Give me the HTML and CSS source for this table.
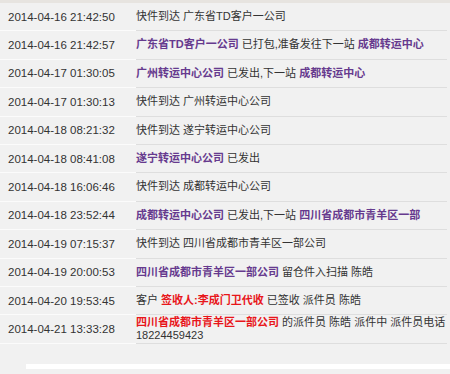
FILE: index.html
```html
<!DOCTYPE html>
<html lang="zh-CN">
<head>
<meta charset="utf-8">
<title>快递跟踪</title>
<link rel="stylesheet" href="styles.css">
</head>
<body>
<div class="topbar"></div>
<div class="track">
  <div class="row"><div class="time">2014-04-16 21:42:50</div><div class="ctx">快件到达 广东省TD客户一公司</div></div>
  <div class="row"><div class="time">2014-04-16 21:42:57</div><div class="ctx"><b class="p">广东省TD客户一公司</b> 已打包,准备发往下一站 <b class="p">成都转运中心</b></div></div>
  <div class="row"><div class="time">2014-04-17 01:30:05</div><div class="ctx"><b class="p">广州转运中心公司</b> 已发出,下一站 <b class="p">成都转运中心</b></div></div>
  <div class="row"><div class="time">2014-04-17 01:30:13</div><div class="ctx">快件到达 广州转运中心公司</div></div>
  <div class="row"><div class="time">2014-04-18 08:21:32</div><div class="ctx">快件到达 遂宁转运中心公司</div></div>
  <div class="row"><div class="time">2014-04-18 08:41:08</div><div class="ctx"><b class="p">遂宁转运中心公司</b> 已发出</div></div>
  <div class="row"><div class="time">2014-04-18 16:06:46</div><div class="ctx">快件到达 成都转运中心公司</div></div>
  <div class="row"><div class="time">2014-04-18 23:52:44</div><div class="ctx"><b class="p">成都转运中心公司</b> 已发出,下一站 <b class="p">四川省成都市青羊区一部</b></div></div>
  <div class="row"><div class="time">2014-04-19 07:15:37</div><div class="ctx">快件到达 四川省成都市青羊区一部公司</div></div>
  <div class="row"><div class="time">2014-04-19 20:00:53</div><div class="ctx"><b class="p">四川省成都市青羊区一部公司</b> 留仓件入扫描 陈皓</div></div>
  <div class="row"><div class="time">2014-04-20 19:53:45</div><div class="ctx">客户 <b class="r">签收人:李成门卫代收</b> 已签收 派件员 陈皓</div></div>
  <div class="row"><div class="time">2014-04-21 13:33:28</div><div class="ctx"><b class="r">四川省成都市青羊区一部公司</b> 的派件员 陈皓 派件中 派件员电话<br>18224459423</div></div>
</div>
<div class="foot"><div class="panel"></div></div>
</body>
</html>
```

FILE: styles.css
```css
html, body {
  margin: 0;
  padding: 0;
  background: #f1f1f1;
  width: 450px;
  height: 374px;
  overflow: hidden;
}
body {
  font-family: "Liberation Sans", "Noto Sans CJK SC", sans-serif;
  color: #333;
}
.topbar {
  height: 3px;
  background: #e7e4e0;
}
.track {
  display: flex;
  flex-direction: column;
  width: 447px;
}
.row {
  display: grid;
  grid-template-columns: 136px 311px;
  min-height: 28.4px;
}
.time {
  display: flex;
  align-items: center;
  padding-left: 8px;
  font-size: 11.5px;
  border-bottom: 1px solid #fbfbfb;
  box-sizing: border-box;
}
.ctx {
  display: flex;
  align-items: center;
  font-size: 11px;
  line-height: 13px;
  border-bottom: 1px solid #dedede;
  box-sizing: border-box;
  white-space: pre-wrap;
}
.ctx { display: block; padding-top: 7px; }
.row:last-child .ctx { padding-top: 1px; }
b { font-weight: bold; }
.p { color: #663a8e; }
.r { color: #e8161b; }
.foot {
  height: 25px;
  display: flex;
  align-items: flex-end;
  padding-left: 26px;
}
.panel {
  flex: 1;
  height: 5px;
  background: #fff;
}
```
